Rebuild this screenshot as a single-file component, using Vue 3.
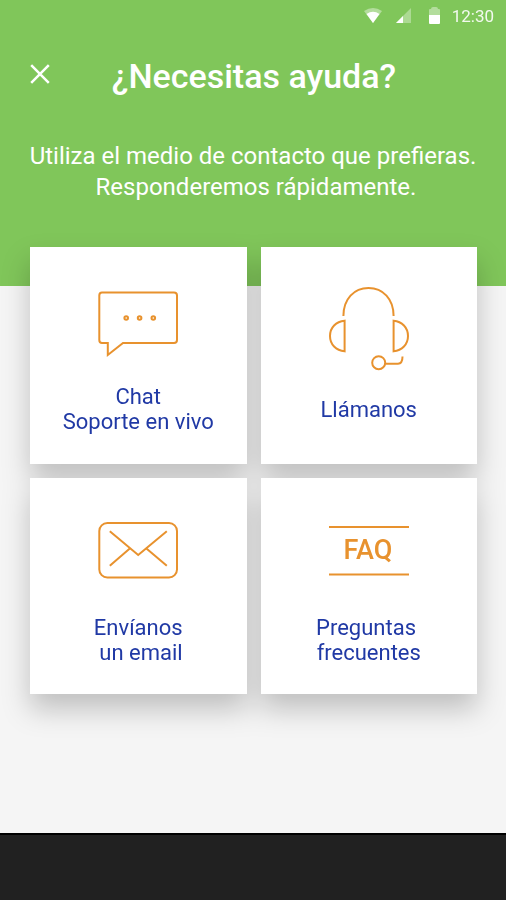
<script setup>
const options = [
  { id: 'chat', lines: ['Chat', 'Soporte en vivo'] },
  { id: 'call', lines: ['Llámanos'] },
  { id: 'email', lines: ['Envíanos', ' un email'] },
  { id: 'faq', lines: ['Preguntas ', 'frecuentes'] },
]
</script>

<template>
  <div class="screen">
    <header class="header">
      <div class="status">
        <svg width="20" height="16" viewBox="0 0 20 16" aria-hidden="true">
          <path d="M0 3 Q9 -3 18 3 L9 15 Z" fill="#fff" opacity=".4" />
          <path d="M2.500 6 Q9 1.500 15.500 6 L9 15 Z" fill="#fff" />
        </svg>
        <svg width="18" height="16" viewBox="0 0 18 16" aria-hidden="true">
          <path d="M0 15 L15 0 V15 Z" fill="#fff" opacity=".35" />
          <path d="M0 15 L7 8 V15 Z" fill="#fff" />
        </svg>
        <svg width="14" height="18" viewBox="0 0 14 18" aria-hidden="true">
          <path d="M3 8 V3 Q3 2 4 2 H5 Q5 0 7 0 H10 Q12 0 12 2 H13 Q14 2 14 3 V8 Z" fill="#fff" opacity=".4" />
          <path d="M3 8 H14 V16 Q14 17 13 17 H4 Q3 17 3 16 Z" fill="#fff" />
        </svg>
        <span class="clock">12:30</span>
      </div>
      <div class="bar">
        <button class="close" type="button" aria-label="Cerrar">
          <svg width="20" height="20" viewBox="0 0 20 20" aria-hidden="true">
            <path d="M1.200 1.200 L18.800 18.800 M18.800 1.200 L1.200 18.800" stroke="#fff" stroke-width="2.500" />
          </svg>
        </button>
        <h1 class="title">¿Necesitas ayuda?</h1>
      </div>
      <p class="intro">Utiliza el medio de contacto que prefieras.<br />&nbsp;Responderemos rápidamente.</p>
    </header>

    <main class="grid">
      <button v-for="option in options" :key="option.id" class="card" type="button">
        <svg class="icon" width="80" height="88" viewBox="0 0 80 88" aria-hidden="true">
          <g v-if="option.id === 'chat'">
            <path d="M9.800 58 H4 Q1.300 58 1.300 55 V10.500 Q1.300 7.500 4 7.500 H76 Q79 7.500 79 10.500 V55 Q79 58 76 58 H25 L9.800 70 Z" />
            <circle cx="28.200" cy="33" r="1.800" />
            <circle cx="41.600" cy="33" r="1.800" />
            <circle cx="55.300" cy="33" r="1.800" />
          </g>
          <g v-else-if="option.id === 'call'">
            <path d="M14.400 31 C14.400 14 25 3 39.500 3 S64.600 14 64.600 31" />
            <path d="M15.600 35.700 V66.300 C7 65.500 1 59.500 1 51 S7 36.500 15.600 35.700 Z" />
            <path d="M64.600 35.700 V66.300 C73 65.500 79 59.500 79 51 S73 36.500 64.600 35.700 Z" />
            <circle cx="49.700" cy="77.700" r="6.500" />
            <path d="M56.200 78.700 H69 Q73.500 78.700 73.500 71.500" />
          </g>
          <g v-else-if="option.id === 'email'">
            <rect x="1.300" y="7" width="77.700" height="54.500" rx="8" />
            <path d="M11.800 15.200 L40.200 39 L68.800 15.200 M11.800 49.800 L31.800 32.500 M48.400 32.500 L68.800 49.800" />
          </g>
          <g v-else>
            <path d="M0 11 H80 M0 58.500 H80" />
            <text class="faq" x="39" y="43" text-anchor="middle">FAQ</text>
          </g>
        </svg>
        <span class="label">
          <span v-for="line in option.lines" :key="line" class="line">{{ line }}</span>
        </span>
      </button>
    </main>

    <footer class="footer"></footer>
  </div>
</template>

<style>
body {
  margin: 0;
}
</style>

<style scoped>
.screen {
  min-height: 100vh;
  display: flex;
  flex-direction: column;
  background: #f5f5f5;
  font-family: Roboto, "Liberation Sans", sans-serif;
}

.header {
  padding-bottom: 83px;
  background: #80c65a;
  color: #fff;
}

.status {
  display: flex;
  justify-content: flex-end;
  align-items: center;
  gap: 12px;
  height: 32px;
  padding-right: 12px;
}

.clock {
  font-size: 17px;
  line-height: 20px;
  opacity: 0.9;
}

.bar {
  display: grid;
  grid-template-columns: 48px 1fr 48px;
  align-items: center;
  height: 88px;
  padding: 0 14px 0 16px;
}

.close {
  display: flex;
  align-items: center;
  justify-content: center;
  box-sizing: border-box;
  height: 48px;
  padding: 0 0 4px;
  border: 0;
  background: none;
  cursor: pointer;
}

.title {
  margin: 0;
  font-size: 34px;
  line-height: 42px;
  font-weight: 500;
  text-align: center;
  white-space: nowrap;
}

.intro {
  margin: 0;
  padding-top: 21px;
  font-size: 24px;
  line-height: 31px;
  text-align: center;
}

.grid {
  display: grid;
  grid-template-columns: 1fr 1fr;
  gap: 14px;
  margin: -39px 29px 24px 30px;
  filter: drop-shadow(0 15px 14px rgba(0, 0, 0, 0.22));
}

.card {
  display: flex;
  flex-direction: column;
  align-items: center;
  justify-content: flex-start;
  aspect-ratio: 1;
  box-sizing: border-box;
  padding: 38px 0 0;
  border: 0;
  background: #fff;
  color: #2039a5;
  font-family: inherit;
  font-size: 22px;
  line-height: 25px;
  cursor: pointer;
}

.icon {
  flex: none;
  fill: none;
  stroke: #e8922e;
  stroke-width: 2;
}

.faq {
  fill: #e8922e;
  stroke: none;
  font-size: 27px;
  font-weight: 500;
}

.label {
  display: flex;
  flex-direction: column;
  justify-content: center;
  min-height: 50px;
  margin-top: 11px;
}

.line {
  white-space: pre;
}

.footer {
  height: 65px;
  margin-top: auto;
  border-top: 2px solid #000;
  background: #212121;
}
</style>
